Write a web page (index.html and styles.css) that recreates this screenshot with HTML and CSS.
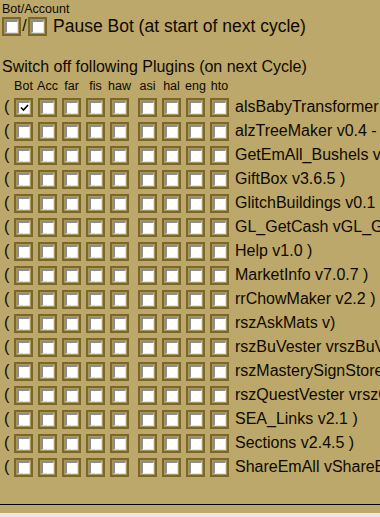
FILE: index.html
```html
<!DOCTYPE html>
<html lang="en">
<head>
  <meta charset="UTF-8">
  <title>Bot settings</title>
  <link rel="stylesheet" href="styles.css">
</head>
<body>
  <div class="panel">
    <div class="small-label">Bot/Account</div>
    <div class="pause-row">
      <span class="cb"><span class="box"></span></span>
      <span class="slash">/</span>
      <span class="cb"><span class="box"></span></span>
      <span class="pause-text">Pause Bot (at start of next cycle)</span>
    </div>

    <div class="title">Switch off following Plugins (on next Cycle)</div>

    <div class="heads">
      <span class="paren"></span>
      <span class="head">Bot</span>
      <span class="head">Acc</span>
      <span class="head">far</span>
      <span class="head">fis</span>
      <span class="head">haw</span>
      <span class="head gap">asi</span>
      <span class="head">hal</span>
      <span class="head">eng</span>
      <span class="head">hto</span>
    </div>

    <div id="plugins"></div>

    <hr class="rule">
  </div>
  <script>
    const plugins = [
      'alsBabyTransformer', 'alzTreeMaker v0.4 - ', 'GetEmAll_Bushels v0.1', 'GiftBox v3.6.5 )',
      'GlitchBuildings v0.1', 'GL_GetCash vGL_GetCash', 'Help v1.0 )', 'MarketInfo v7.0.7 )',
      'rrChowMaker v2.2 )', 'rszAskMats v)', 'rszBuVester vrszBuVester', 'rszMasterySignStorer',
      'rszQuestVester vrszQuestVester', 'SEA_Links v2.1 )', 'Sections v2.4.5 )', 'ShareEmAll vShareEmAll'
    ];
    const list = document.getElementById('plugins');
    plugins.forEach(function(name, i) {
      let row = '<div class="row"><span class="paren">(</span>';
      for (let c = 0; c < 9; c++) {
        const cls = c === 5 ? 'cb gap' : 'cb';
        const mark = (i === 0 && c === 0) ? '<svg viewBox="0 0 9 9" width="9" height="9"><path d="M1 4.5 L3.5 7 L8 2" fill="none" stroke="#000" stroke-width="1.6"/></svg>' : '';
        row += '<span class="' + cls + '"><span class="box">' + mark + '</span></span>';
      }
      row += '<span class="name">' + name + '</span></div>';
      list.insertAdjacentHTML('beforeend', row);
    });
  </script>
</body>
</html>
```

FILE: styles.css
```css
* {
  margin: 0;
  padding: 0;
  box-sizing: border-box;
}
html, body {
  width: 100%;
  height: 100%;
  overflow: hidden;
  background: #e8e8e8;
  font-family: Tahoma, "Liberation Sans", sans-serif;
  color: #100800;
}
.panel {
  height: 513px;
  background: #bba86a;
  padding: 2px 0 0 2px;
  overflow: hidden;
}
.small-label {
  font-size: 12.5px;
  line-height: 14px;
}
.pause-row {
  display: flex;
  align-items: center;
  height: 20px;
}
.slash {
  font-size: 16px;
  width: 7px;
  text-align: center;
}
.pause-text {
  font-size: 17.5px;
  margin-left: 6px;
}
.title {
  font-size: 16px;
  line-height: 18px;
  margin-top: 22px;
}
.heads, .row {
  display: flex;
  align-items: center;
  gap: 5px;
}
.heads {
  height: 16px;
  margin-top: 2px;
}
.head {
  width: 19px;
  font-size: 12.5px;
  text-align: center;
  white-space: nowrap;
  display: flex;
  justify-content: center;
}
.paren {
  width: 7px;
  font-size: 16px;
  padding-left: 2px;
}
.gap {
  margin-left: 4px;
}
#plugins {
  margin-top: 1px;
}
.row {
  height: 24px;
}
.cb {
  width: 19px;
  height: 19px;
  flex: none;
  border: 2px solid #7a682a;
  background: #a8965a;
  padding: 1px;
  display: flex;
}
.box {
  flex: 1;
  background: #fff;
  border-top: 2px solid #8a8c98;
  border-left: 2px solid #8a8c98;
  border-right: 1px solid #e4e4e4;
  border-bottom: 1px solid #e4e4e4;
  display: flex;
  align-items: center;
  justify-content: center;
}
.name {
  font-size: 16px;
  white-space: nowrap;
  margin-left: 1px;
}
.rule {
  border: none;
  border-top: 1px solid #000;
  margin: 25px 0 0 -2px;
}
```
